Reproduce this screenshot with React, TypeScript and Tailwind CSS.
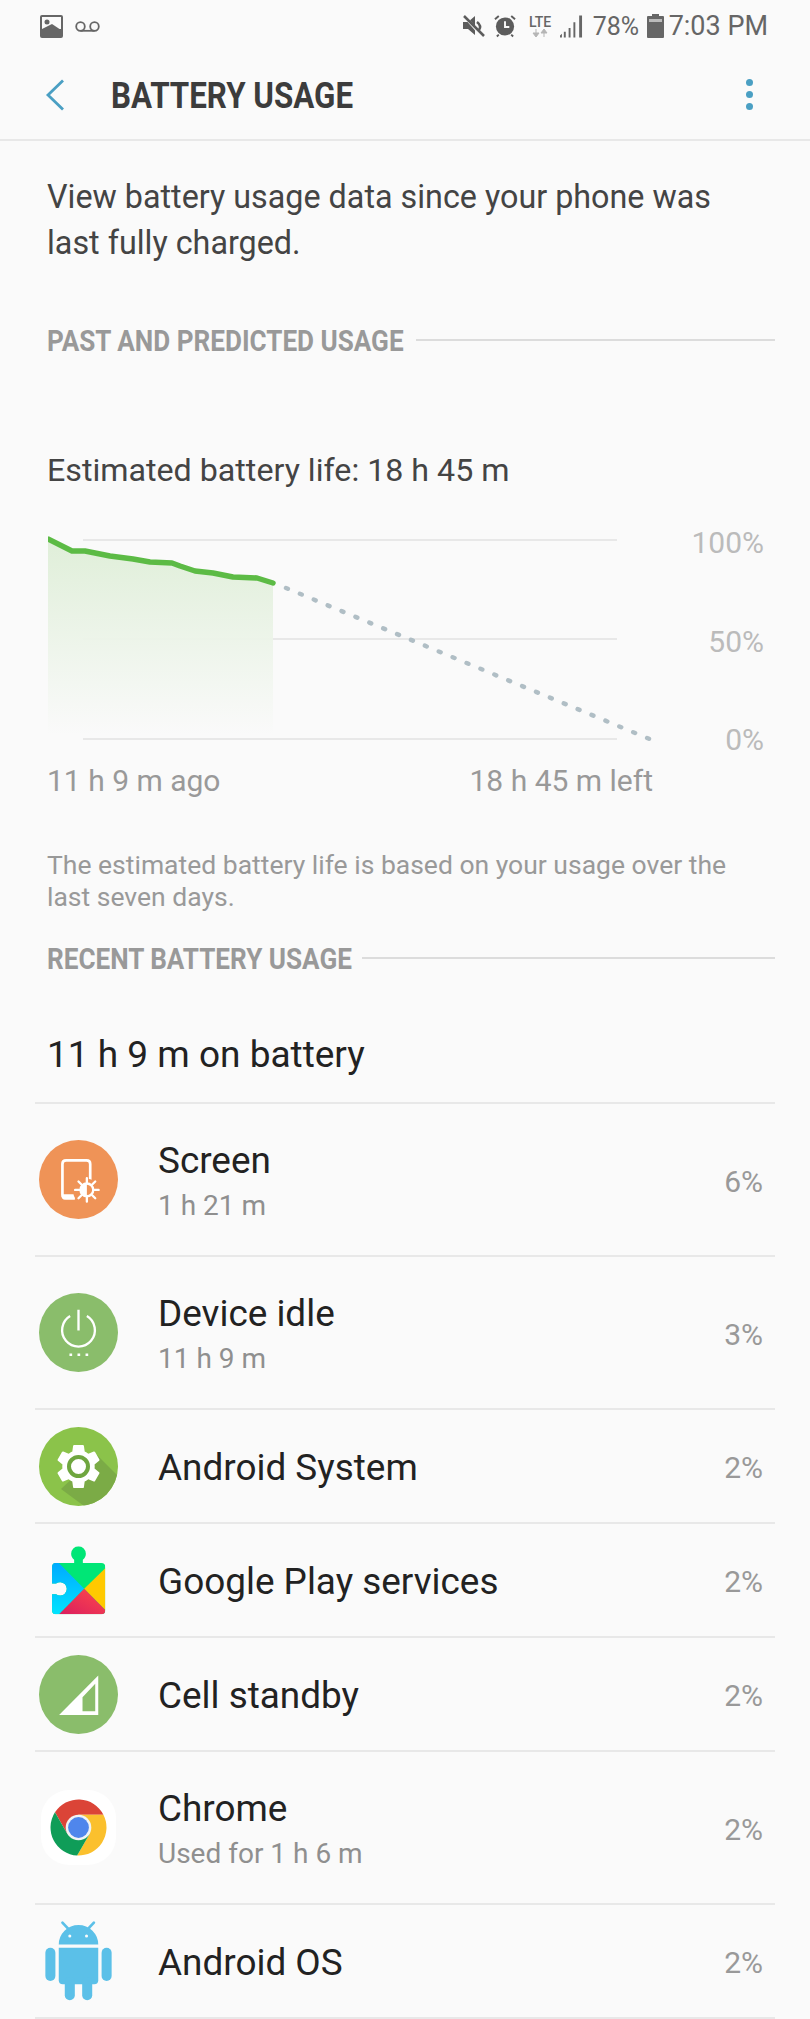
import React from 'react';

const ScreenIcon = () => (
  <svg viewBox="57 60 236 236" className="h-[79px] w-[79px]">
    <circle cx="175" cy="178" r="118" fill="#ef9357" />
    <path d="M163 234H138Q127 234 127 223V132Q127 121 138 121H199Q210 121 210 132V180" fill="none" stroke="#fff" strokeWidth="8" />
    <path d="M125 222H160L165 238H135Q125 238 125 228Z" fill="#fff" />
    <circle cx="200" cy="209" r="33" fill="#ef9357" />
    <circle cx="200" cy="209" r="19" fill="none" stroke="#fff" strokeWidth="7" />
    <path d="M200 188A21 21 0 0 0 200 230Z" fill="#fff" />
    <path d="M200 186V174M200 244V232M177 209H165M235 209H223M184 193L175 184M225 234L216 225M216 193L225 184M175 234L184 225" stroke="#fff" strokeWidth="7" strokeLinecap="round" />
  </svg>
);

const IdleIcon = () => (
  <svg viewBox="57 38 236 236" className="h-[79px] w-[79px]">
    <circle cx="175" cy="156" r="118" fill="#8abd6b" />
    <path d="M150 107A49 49 0 1 0 200 107" fill="none" stroke="#fff" strokeWidth="7" />
    <path d="M175 88V150" stroke="#fff" strokeWidth="7" />
    <path d="M148 219h8v7h-8zM172 219h8v7h-8zM196 219h8v7h-8z" fill="#fff" />
  </svg>
);

const SystemIcon = () => (
  <svg viewBox="0 0 79 79" className="h-[79px] w-[79px]">
    <defs>
      <clipPath id="sys-clip">
        <circle cx="39.5" cy="39.5" r="39.5" />
      </clipPath>
    </defs>
    <circle cx="39.5" cy="39.5" r="39.5" fill="#8bc34a" />
    <path d="M58 28L90 60L60 90L22 62Z" fill="#7bab46" clipPath="url(#sys-clip)" />
    <g transform="translate(12.5 12.5) scale(2.25)">
      <path fill="#fff" d="M19.14 12.94c.04-.3.06-.61.06-.94 0-.32-.02-.64-.07-.94l2.03-1.58c.18-.14.23-.41.12-.61l-1.92-3.32c-.12-.22-.37-.29-.59-.22l-2.39.96c-.5-.38-1.03-.7-1.62-.94l-.36-2.54c-.04-.24-.24-.41-.48-.41h-3.84c-.24 0-.43.17-.47.41l-.36 2.54c-.59.24-1.13.57-1.62.94l-2.39-.96c-.22-.08-.47 0-.59.22L2.74 8.87c-.12.21-.08.47.12.61l2.03 1.58c-.05.3-.09.63-.09.94s.02.64.07.94l-2.03 1.58c-.18.14-.23.41-.12.61l1.92 3.32c.12.22.37.29.59.22l2.39-.96c.5.38 1.03.7 1.62.94l.36 2.54c.05.24.24.41.48.41h3.84c.24 0 .44-.17.47-.41l.36-2.54c.59-.24 1.13-.56 1.62-.94l2.39.96c.22.08.47 0 .59-.22l1.92-3.32c.12-.22.07-.47-.12-.61l-2.01-1.58z" />
    </g>
    <circle cx="39.5" cy="39.5" r="9.5" fill="#fff" stroke="#6fa63f" strokeWidth="4" />
  </svg>
);

const PlayIcon = () => (
  <svg viewBox="90 36 170 212" className="h-[71px] w-[57px]">
    <defs>
      <clipPath id="play-clip">
        <path d="M107 90H243Q255 90 255 102V231Q255 243 243 243H107Q96 243 96 231V183H108A20 20 0 1 0 108 151H96V102Q96 90 107 90Z" />
        <circle cx="175" cy="62" r="22" />
        <rect x="162" y="70" width="26" height="25" />
      </clipPath>
      <linearGradient id="play-blue" x1="0" y1="0" x2="0" y2="1">
        <stop offset="0" stopColor="#00a8ff" />
        <stop offset="1" stopColor="#00e5ff" />
      </linearGradient>
      <linearGradient id="play-red" x1="1" y1="0" x2="0" y2="1">
        <stop offset="0" stopColor="#ff4a4a" />
        <stop offset="1" stopColor="#d81b60" />
      </linearGradient>
    </defs>
    <g clipPath="url(#play-clip)">
      <rect x="90" y="36" width="170" height="212" fill="#00e676" />
      <path d="M90 85H112L192 167L112 248H90Z" fill="url(#play-blue)" />
      <path d="M260 100L192 167L260 235Z" fill="#ffc900" />
      <path d="M192 167L260 235V248H112Z" fill="url(#play-red)" />
    </g>
  </svg>
);

const CellIcon = () => (
  <svg viewBox="57 42 236 236" className="h-[79px] w-[79px]">
    <circle cx="175" cy="160" r="118" fill="#8abd6b" />
    <path fillRule="evenodd" d="M117 221L234 103V221ZM187 210H225V128L187 168Z" fill="#fff" />
  </svg>
);

const ChromeIcon = () => (
  <svg viewBox="-37.5 -37.5 75 75" className="h-[75px] w-[75px]">
    <rect x="-37.5" y="-37.5" width="75" height="75" rx="28" fill="#fff" />
    <path d="M24.9 -12.8A28 28 0 0 0 -23.53 -15.16L-11.08 6.4L0 -12.8Z" fill="#db4437" />
    <path d="M-1.37 27.96A28 28 0 0 0 24.9 -12.8L0 -12.8L11.08 6.4Z" fill="#fbc02d" />
    <path d="M-23.53 -15.16A28 28 0 0 0 -1.37 27.96L11.08 6.4L-11.08 6.4Z" fill="#0f9d58" />
    <circle r="12.8" fill="#f1f3f4" />
    <circle r="10.4" fill="#4f86ec" />
  </svg>
);

const AndroidIcon = () => (
  <svg viewBox="70 420 212 245" className="h-[82px] w-[71px]">
    <g fill="#5bc0e8">
      <path d="M117 493A59 58 0 0 1 235 493Z" />
      <path d="M117 503H235V600Q235 612 223 612H129Q117 612 117 600Z" />
      <rect x="77" y="503" width="30" height="99" rx="15" />
      <rect x="245" y="503" width="30" height="99" rx="15" />
      <rect x="135" y="590" width="30" height="70" rx="15" />
      <rect x="187" y="590" width="30" height="70" rx="15" />
    </g>
    <path d="M128 428L147 448M222 428L203 448" stroke="#5bc0e8" strokeWidth="8" strokeLinecap="round" />
    <circle cx="150" cy="468" r="4.5" fill="#fafafa" />
    <circle cx="200" cy="468" r="4.5" fill="#fafafa" />
  </svg>
);

const StatusBar = () => (
  <div className="flex h-[50px] items-center justify-between pl-[40px] pr-[42px] pt-[2px] text-[#666]">
    <div className="flex items-center gap-[12px]">
      <svg viewBox="0 0 23 23" className="h-[23px] w-[23px]">
        <rect width="23" height="23" rx="2" fill="#666" />
        <rect x="2" y="2" width="19" height="12" fill="#fafafa" />
        <circle cx="7" cy="7" r="2.5" fill="#666" />
        <path d="M2 14L8 11L12 9L21 15V17H2Z" fill="#666" />
      </svg>
      <svg viewBox="0 0 25 11" className="h-[11px] w-[25px]">
        <circle cx="5.5" cy="5.5" r="4.3" fill="none" stroke="#666" strokeWidth="1.8" />
        <circle cx="19.5" cy="5.5" r="4.3" fill="none" stroke="#666" strokeWidth="1.8" />
        <path d="M5.5 9.8H19.5" stroke="#666" strokeWidth="1.8" />
      </svg>
    </div>
    <div className="flex items-center">
      <svg viewBox="0 0 22 22" className="h-[22px] w-[22px]">
        <path d="M0 7H5L12 1V20L5 14H0Z" fill="#5c5c5c" />
        <path d="M14 7Q19 11 16 15" fill="none" stroke="#5c5c5c" strokeWidth="2.5" />
        <path d="M3 3L19 21" stroke="#fafafa" strokeWidth="3" />
        <path d="M1 1L21 21" stroke="#5c5c5c" strokeWidth="2.5" />
      </svg>
      <svg viewBox="0 0 23 24" className="ml-[9px] h-[24px] w-[22px]">
        <circle cx="11.5" cy="12.5" r="9.5" fill="#5c5c5c" />
        <path d="M11.5 7V13H16" fill="none" stroke="#fafafa" strokeWidth="2" />
        <path d="M1 5L5 1.5M22 5L18 1.5M5 21L3 23M18 21L20 23" stroke="#5c5c5c" strokeWidth="2" />
      </svg>
      <div className="ml-[12px] flex w-[25px] flex-col items-center">
        <span className="text-[14px] font-medium leading-[14px]">LTE</span>
        <svg viewBox="0 0 16 8" className="h-[8px] w-[16px]">
          <path d="M4 0V4M1 4H7L4 8Z" fill="#b5b5b5" stroke="#b5b5b5" strokeWidth="1" />
          <path d="M12 8V4M9 4H15L12 0Z" fill="#b5b5b5" stroke="#b5b5b5" strokeWidth="1" />
        </svg>
      </div>
      <svg viewBox="0 0 24 24" className="ml-[7px] h-[24px] w-[23px]">
        <path d="M0 22L2 20V24H0ZM4 18H6V24H4ZM9 14H11V24H9ZM14 8H16V24H14ZM20 1H23V24H20Z" fill="#666" />
      </svg>
      <span className="ml-[10px] w-[45px] whitespace-nowrap text-[25px] leading-none">78%</span>
      <svg viewBox="0 0 17 24" className="ml-[9px] h-[24px] w-[17px]">
        <path d="M5 0H12V2H16Q17 2 17 3V23Q17 24 16 24H1Q0 24 0 23V3Q0 2 1 2H5Z" fill="#666" />
        <rect x="2" y="5" width="13" height="3" fill="#bbb" />
      </svg>
      <span className="ml-[5px] whitespace-nowrap text-[27px] leading-none">7:03 PM</span>
    </div>
  </div>
);

const Header = () => (
  <div className="flex h-[91px] items-center justify-between border-b-[2px] border-[#e8e8e8] pl-[45px] pr-[57px]">
    <div className="flex items-center">
      <svg viewBox="0 0 20 32" className="h-[32px] w-[20px]">
        <path d="M18 1.5L3 16L18 30.5" fill="none" stroke="#4a9fc3" strokeWidth="2.8" />
      </svg>
      <h1 className="ml-[46px] origin-left scale-x-[0.87] whitespace-nowrap pt-[3px] text-[36px] font-bold leading-none text-[#3c3c3c]">
        BATTERY USAGE
      </h1>
    </div>
    <div className="flex flex-col gap-[5px]">
      <span className="h-[7px] w-[7px] rounded-full bg-[#4a9fc3]" />
      <span className="h-[7px] w-[7px] rounded-full bg-[#4a9fc3]" />
      <span className="h-[7px] w-[7px] rounded-full bg-[#4a9fc3]" />
    </div>
  </div>
);

const SectionTitle = ({ title, width }: { title: string; width: string }) => (
  <div className="flex items-center pl-[12px]">
    <span className={`${width} whitespace-nowrap`}>
      <span className="inline-block origin-left scale-x-[0.87] text-[30px] font-bold leading-none text-[#999]">
        {title}
      </span>
    </span>
    <div className="h-[2px] flex-1 -translate-y-[2px] bg-[#dcdcdc]" />
  </div>
);

const Chart = () => (
  <div className="relative mt-[40px] h-[220px]">
    <svg viewBox="48 530 727 220" className="h-[220px] w-[727px] translate-x-[13px]">
      <defs>
        <linearGradient id="area" x1="0" y1="0" x2="0" y2="1">
          <stop offset="0" stopColor="#deeed7" />
          <stop offset="1" stopColor="#fafafa" />
        </linearGradient>
      </defs>
      <path d="M83 540H617M83 639H617M83 739H617" stroke="#e8e8e8" strokeWidth="2" fill="none" />
      <path d="M48 539L72 551L85 551L110 556L133 559L150 562L172 563L180 566L195 571L213 573L233 577L257 578L273 583V735H48Z" fill="url(#area)" opacity="0.95" />
      <path d="M48 539L72 551L85 551L110 556L133 559L150 562L172 563L180 566L195 571L213 573L233 577L257 578L273 583" fill="none" stroke="#5cbb45" strokeWidth="5.5" strokeLinecap="round" strokeLinejoin="round" />
      <path d="M286 588L650 739.2" fill="none" stroke="#b0bec5" strokeWidth="4.5" strokeLinecap="round" strokeDasharray="2 13.04" />
    </svg>
    <div className="absolute right-[11px] top-[-2px] flex h-[227px] flex-col items-end justify-between text-[30px] leading-[30px] text-[#bbb]">
      <span>100%</span>
      <span>50%</span>
      <span>0%</span>
    </div>
  </div>
);

type Row = { name: string; sub?: string; pct: string; icon: React.ReactNode };

const rows: Row[] = [
  { name: 'Screen', sub: '1 h 21 m', pct: '6%', icon: <ScreenIcon /> },
  { name: 'Device idle', sub: '11 h 9 m', pct: '3%', icon: <IdleIcon /> },
  { name: 'Android System', pct: '2%', icon: <SystemIcon /> },
  { name: 'Google Play services', pct: '2%', icon: <PlayIcon /> },
  { name: 'Cell standby', pct: '2%', icon: <CellIcon /> },
  { name: 'Chrome', sub: 'Used for 1 h 6 m', pct: '2%', icon: <ChromeIcon /> },
  { name: 'Android OS', pct: '2%', icon: <AndroidIcon /> },
];

const UsageRow = ({ row }: { row: Row }) => (
  <div className={`flex items-center border-b-[2px] border-[#e8e8e8] pl-[4px] pr-[12px] ${row.sub ? 'h-[153px]' : 'h-[114px]'}`}>
    <div className="flex w-[79px] items-center justify-center">{row.icon}</div>
    <div className="ml-[40px] flex-1 pt-[3px]">
      <div className="text-[36.9px] leading-[44px] text-[#222]">{row.name}</div>
      {row.sub && <div className="-mb-[3px] mt-[3px] text-[28px] leading-[40px] text-[#8f8f8f]">{row.sub}</div>}
    </div>
    <span className="pt-[3px] text-[30px] text-[#999]">{row.pct}</span>
  </div>
);

export default function App() {
  return (
    <div className="h-[2019px] w-[810px] overflow-hidden bg-[#fafafa] font-['Roboto',sans-serif]">
      <StatusBar />
      <Header />
      <div className="px-[35px]">
        <p className="mt-[33px] whitespace-nowrap pl-[12px] text-[32.3px] leading-[46px] text-[#444]">
          View battery usage data since your phone was
          <br />
          last fully charged.
        </p>
        <div className="mt-[60px]">
          <SectionTitle title="PAST AND PREDICTED USAGE" width="w-[369px]" />
        </div>
        <p className="mt-[92px] pl-[12px] text-[32.2px] leading-[40px] text-[#444]">Estimated battery life: 18 h 45 m</p>
        <Chart />
        <div className="mt-[13px] flex justify-between pl-[12px] pr-[122px] text-[30px] leading-[36px] text-[#999]">
          <span>11 h 9 m ago</span>
          <span>18 h 45 m left</span>
        </div>
        <p className="mt-[50px] whitespace-nowrap pl-[12px] text-[26.5px] leading-[32px] text-[#999]">
          The estimated battery life is based on your usage over the
          <br />
          last seven days.
        </p>
        <div className="mt-[31px]">
          <SectionTitle title="RECENT BATTERY USAGE" width="w-[315px]" />
        </div>
        <div className="flex h-[128px] items-center border-b-[2px] border-[#e8e8e8] pl-[12px] pt-[31px] text-[37px] text-[#222]">
          11 h 9 m on battery
        </div>
        {rows.map((row) => (
          <UsageRow key={row.name} row={row} />
        ))}
      </div>
    </div>
  );
}
